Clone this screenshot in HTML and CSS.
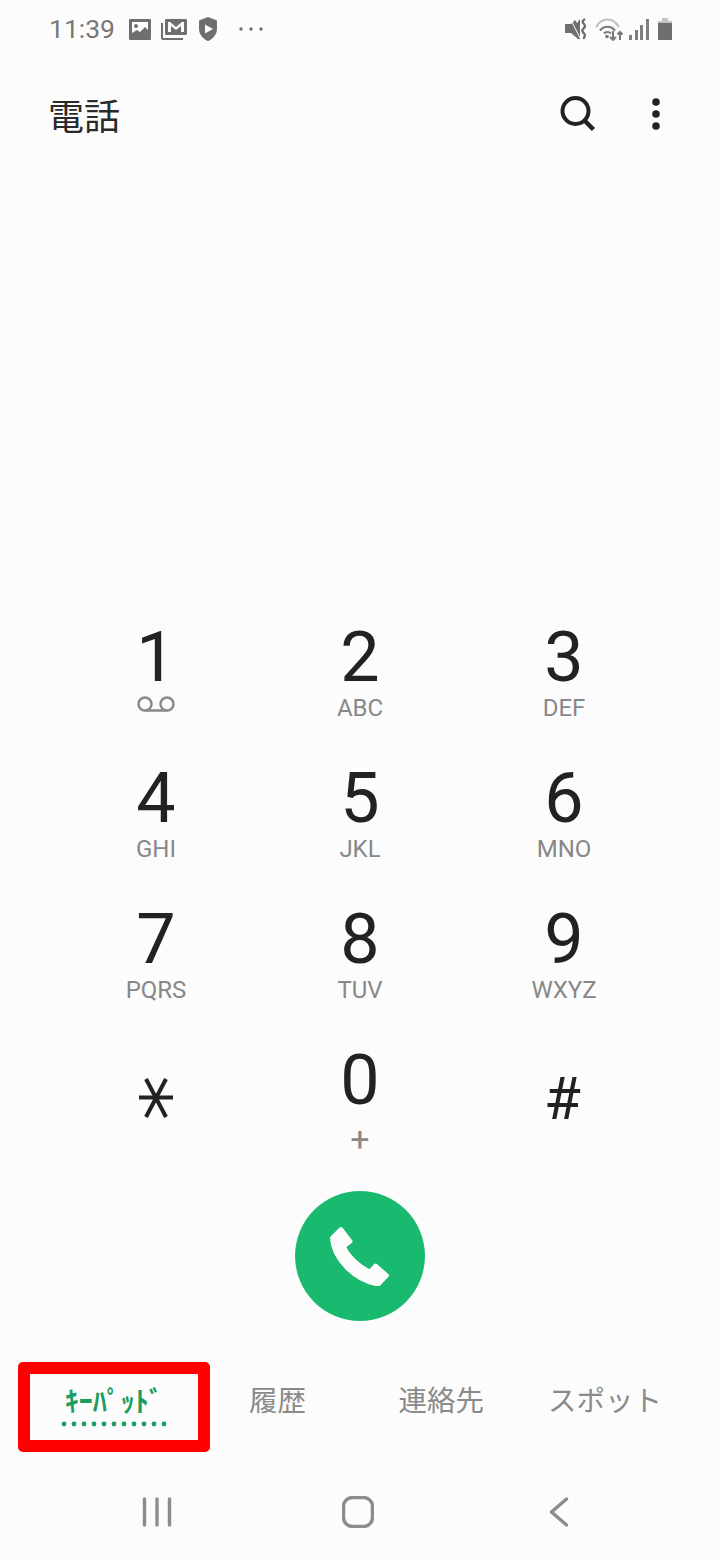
FILE: index.html
```html
<!DOCTYPE html>
<html lang="ja">
<head>
<meta charset="utf-8">
<title>電話</title>
<link rel="stylesheet" href="styles.css">
</head>
<body>
<main class="phone">
  <header class="status">
    <div class="status-left">
      <span class="time">11:39</span>
      <svg class="ic ic-img" viewBox="0 0 22 21"><path fill="#6f6f6f" fill-rule="evenodd" d="M1 0h20a1 1 0 0 1 1 1v19a1 1 0 0 1-1 1H1a1 1 0 0 1-1-1V1a1 1 0 0 1 1-1zm2 3v11l5-3 3 2 5-5 3 3V3z"/><circle cx="7" cy="7" r="2" fill="#6f6f6f"/></svg>
      <svg class="ic ic-mail" viewBox="0 0 26 22"><path fill="none" stroke="#6f6f6f" stroke-width="2" d="M1 5v15a1 1 0 0 0 1 1h20"/><path fill="#6f6f6f" d="M5 1h20a1 1 0 0 1 1 1v14a1 1 0 0 1-1 1H5a1 1 0 0 1-1-1V2a1 1 0 0 1 1-1z"/><path fill="#fcfcfc" d="M7 4h2l6 5 6-5h2v10h-3V8l-5 4-5-4v6H7z"/></svg>
      <svg class="ic ic-shield" viewBox="0 0 20 24"><path fill="#6f6f6f" d="M10 0l9 3.500v8c0 6-4 10.500-9 12.500-5-2-9-6.500-9-12.500v-8z"/><path fill="#fcfcfc" d="M7 7.500l8 4.500-8 4.500z"/></svg>
      <svg class="ic ic-more" viewBox="0 0 24 4"><circle cx="2" cy="2" r="1.700" fill="#6f6f6f"/><circle cx="12" cy="2" r="1.700" fill="#6f6f6f"/><circle cx="22" cy="2" r="1.700" fill="#6f6f6f"/></svg>
    </div>
    <div class="status-right">
      <svg class="ic ic-mute" viewBox="0 0 22 22"><path fill="#6f6f6f" d="M0 6h6L10 2l2 3 3-4v20h-2l-7-6H0z"/><path fill="none" stroke="#fcfcfc" stroke-width="1" d="M5 0l10 20"/><path fill="none" stroke="#6f6f6f" stroke-width="2.400" d="M20 1c-3 2-3 3-1 5s1 3-1 5 0 3 1.500 5-1 3-.5 5"/></svg>
      <svg class="ic ic-wifi" viewBox="0 0 28 23"><g fill="none" stroke-width="2.200"><path stroke="#c0c0c0" d="M1 9c6-10 17-10 23 0"/><path stroke="#7a7a7a" d="M5 12.500c4-5 11-5 15 0"/><path stroke="#7a7a7a" d="M9 15.500c2-2 5-2 7 0"/></g><circle cx="12" cy="18.500" r="1.800" fill="#7a7a7a"/><path fill="none" stroke="#7a7a7a" stroke-width="2" d="M18 13v9m-3-3l3 3 3-3M25 22v-8m-2.500 2.500l2.500-2.500 2.500 2.500"/></svg>
      <svg class="ic ic-signal" viewBox="0 0 20 21"><path fill="#7d7d7d" d="M0 16h3v5H0zM6 11h3v10H6zM11 6h3v15h-3zM17 0h3v21h-3z"/></svg>
      <svg class="ic ic-batt" viewBox="0 0 14 22"><path fill="#c4c4c4" d="M4 0h6v3h4v3H0V3h4z"/><path fill="#6f6f6f" d="M0 5h14v17H0z"/></svg>
    </div>
  </header>

  <section class="appbar">
    <h1 class="title">電話</h1>
    <div class="actions">
      <svg class="search" viewBox="0 0 36 36"><circle cx="15.500" cy="15" r="13" fill="none" stroke="#222" stroke-width="4"/><path stroke="#222" stroke-width="4.500" d="M24.500 24.500l9 9"/></svg>
      <svg class="kebab" viewBox="0 0 8 32"><circle cx="4" cy="4" r="3.800" fill="#222"/><circle cx="4" cy="16" r="3.800" fill="#222"/><circle cx="4" cy="28" r="3.800" fill="#222"/></svg>
    </div>
  </section>

  <section class="keypad">
    <div class="key"><span class="digit">1</span><svg class="vm" viewBox="0 0 38 16"><g fill="none" stroke="#8a8a8a" stroke-width="2.500"><circle cx="8" cy="8" r="6.500"/><circle cx="30" cy="8" r="6.500"/><path d="M8 14.500h22"/></g></svg></div>
    <div class="key"><span class="digit">2</span><span class="sub">ABC</span></div>
    <div class="key"><span class="digit">3</span><span class="sub">DEF</span></div>
    <div class="key"><span class="digit">4</span><span class="sub">GHI</span></div>
    <div class="key"><span class="digit">5</span><span class="sub">JKL</span></div>
    <div class="key"><span class="digit">6</span><span class="sub">MNO</span></div>
    <div class="key"><span class="digit">7</span><span class="sub">PQRS</span></div>
    <div class="key"><span class="digit">8</span><span class="sub">TUV</span></div>
    <div class="key"><span class="digit">9</span><span class="sub">WXYZ</span></div>
    <div class="key key-sym"><svg class="star" viewBox="0 0 34 40"><g stroke="#222" stroke-width="4"><path d="M0 19.500h34"/><path d="M7 1l20 38"/><path d="M27 1L7 39"/></g></svg></div>
    <div class="key"><span class="digit">0</span><span class="sub sub-plus">+</span></div>
    <div class="key key-sym"><span class="hash">#</span></div>
  </section>

  <div class="call-row">
    <button class="call" type="button" aria-label="発信">
      <svg class="handset" viewBox="1 0 60 60"><path fill="#fcfcfc" stroke="#fcfcfc" stroke-width="4" stroke-linejoin="round" d="M12 3L21.500 15.500 15 20.500C18 29 30 41 41 45.500L46.500 39.500 58 49.500 49.500 58.500C26 55 4 33 3 12Z"/></svg>
    </button>
  </div>

  <nav class="tabs">
    <div class="tab tab-active"><span class="tab-label">ｷｰﾊﾟｯﾄﾞ</span><svg class="dots" viewBox="0 0 110 6"><g fill="#1a9d60"><circle cx="5" cy="3" r="2.400"/><circle cx="15" cy="3" r="2.400"/><circle cx="25" cy="3" r="2.400"/><circle cx="35" cy="3" r="2.400"/><circle cx="45" cy="3" r="2.400"/><circle cx="55" cy="3" r="2.400"/><circle cx="65" cy="3" r="2.400"/><circle cx="75" cy="3" r="2.400"/><circle cx="85" cy="3" r="2.400"/><circle cx="95" cy="3" r="2.400"/><circle cx="105" cy="3" r="2.400"/></g></svg></div>
    <div class="tab"><span class="tab-label">履歴</span></div>
    <div class="tab"><span class="tab-label">連絡先</span></div>
    <div class="tab"><span class="tab-label">スポット</span></div>
    <div class="highlight"></div>
  </nav>

  <footer class="navbar">
    <svg class="nav-recents" viewBox="0 0 30 30"><g stroke="#8c8c8c" stroke-width="3.400" stroke-linecap="round"><path d="M2.500 2v26"/><path d="M15 2v26"/><path d="M27.500 2v26"/></g></svg>
    <svg class="nav-home" viewBox="0 0 32 32"><rect x="1.500" y="1.500" width="29" height="29" rx="9" fill="none" stroke="#8c8c8c" stroke-width="3.400"/></svg>
    <svg class="nav-back" viewBox="0 0 20 30"><path d="M17.500 2L2.500 15l15 13" fill="none" stroke="#8c8c8c" stroke-width="3.400" stroke-linecap="round" stroke-linejoin="round"/></svg>
  </footer>
</main>
</body>
</html>
```

FILE: styles.css
```css
* { box-sizing: border-box; }
html, body { margin: 0; padding: 0; background: #fcfcfc; }
body { font-family: Roboto, "Noto Sans CJK JP", sans-serif; }

.phone {
  position: relative;
  width: 720px;
  height: 1560px;
  display: flex;
  flex-direction: column;
  overflow: hidden;
}
.ic { display: block; flex: none; }

.status {
  height: 58px;
  padding: 0 48px 0 49px;
  display: flex;
  justify-content: space-between;
  align-items: center;
}
.status-left, .status-right { display: flex; align-items: center; }
.time { font-size: 26.500px; color: #777; width: 80px; line-height: 58px; }
.ic-img { width: 22px; height: 21px; }
.ic-mail { width: 26px; height: 22px; margin-left: 10px; }
.ic-shield { width: 20px; height: 24px; margin-left: 11px; }
.ic-more { width: 24px; height: 4px; margin-left: 21px; }
.ic-mute { width: 22px; height: 22px; }
.ic-wifi { width: 28px; height: 23px; margin-left: 8px; }
.ic-signal { width: 20px; height: 21px; margin-left: 6px; }
.ic-batt { width: 14px; height: 22px; margin-left: 9px; }

.appbar {
  height: 118px;
  padding: 0 60px 0 48px;
  display: flex;
  justify-content: space-between;
  align-items: center;
}
.title {
  margin: -7px 0 0;
  font-family: "Noto Sans CJK JP", sans-serif;
  font-size: 36px;
  font-weight: 400;
  color: #2a2a2a;
}
.actions { display: flex; align-items: center; gap: 56px; margin-top: -6px; }
.search { width: 36px; height: 36px; display: block; }
.kebab { width: 8px; height: 32px; display: block; }

.keypad {
  margin-top: auto;
  padding: 0 54px;
  display: grid;
  grid-template-columns: repeat(3, 204px);
  grid-auto-rows: 141px;
}
.key { display: flex; flex-direction: column; align-items: center; }
.digit { font-size: 70px; line-height: 72px; color: #222; }
.sub { font-size: 24px; line-height: 30px; color: #888; }
.sub-plus { font-size: 34px; line-height: 46px; }
.vm { width: 38px; height: 16px; margin-top: 3px; display: block; }
.key-sym { justify-content: flex-start; }
.star { width: 34px; height: 40px; margin-top: 34px; display: block; }
.hash { font-size: 60px; line-height: 66px; margin-top: 22px; margin-left: -3px; color: #222; }

.call-row { display: flex; justify-content: center; margin-top: 6px; }
.call {
  width: 130px;
  height: 130px;
  padding: 0;
  border: 0;
  border-radius: 50%;
  background: #19b96f;
  display: flex;
  align-items: center;
  justify-content: center;
}
.handset { width: 60px; height: 60px; display: block; }

.tabs {
  position: relative;
  margin-top: 41px;
  height: 90px;
  padding: 17px 33px 0 32px;
  display: grid;
  grid-template-columns: repeat(4, 1fr);
}
.tab { display: flex; flex-direction: column; align-items: center; }
.tab-label {
  font-family: "Noto Sans CJK JP", sans-serif;
  font-size: 28.500px;
  line-height: 40px;
  color: #8a8a8a;
  white-space: nowrap;
}
.tab-active { padding-top: 1px; }
.tab-active .tab-label {
  font-size: 28px;
  font-weight: 700;
  color: #1a9d60;
}
.dots {
  width: 110px;
  height: 6px;
  margin-top: 1px;
  display: block;
  flex: none;
}
.highlight {
  position: absolute;
  left: 18px;
  top: 0;
  width: 192px;
  height: 90px;
  border: 12px solid #fe0000;
  border-radius: 5px;
}

.navbar {
  margin-top: 18px;
  height: 90px;
  padding: 0 60px 6px 56px;
  display: grid;
  grid-template-columns: repeat(3, 1fr);
  justify-items: center;
  align-items: center;
}
.nav-recents { width: 30px; height: 30px; display: block; }
.nav-home { width: 32px; height: 32px; display: block; }
.nav-back { width: 20px; height: 30px; display: block; }
```
